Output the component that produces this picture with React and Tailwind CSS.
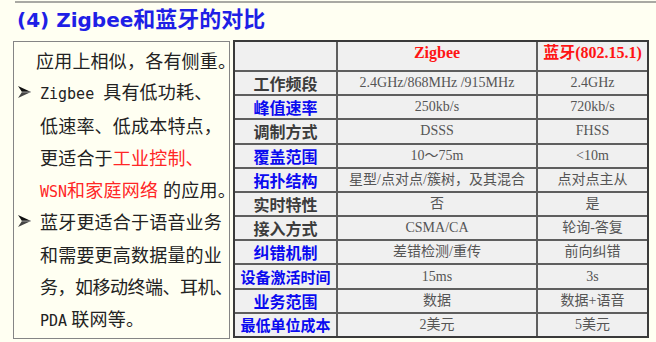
import React from "react";

const Arrow = () => (
  <svg width="13" height="12" viewBox="0 0 13 12" className="shrink-0">
    <polygon points="0,0 13,6 4,6" fill="#111" />
    <polygon points="4,6 13,6 0,12" fill="#444" />
    <line x1="4" y1="6" x2="13" y2="6" stroke="#bbb" strokeWidth="0.8" />
  </svg>
);

const rows = [
  ["工作频段", false, "2.4GHz/868MHz /915MHz", "2.4GHz"],
  ["峰值速率", true, "250kb/s", "720kb/s"],
  ["调制方式", false, "DSSS", "FHSS"],
  ["覆盖范围", true, "10～75m", "<10m"],
  ["拓扑结构", true, "星型/点对点/簇树，及其混合", "点对点主从"],
  ["实时特性", false, "否", "是"],
  ["接入方式", false, "CSMA/CA", "轮询-答复"],
  ["纠错机制", true, "差错检测/重传", "前向纠错"],
  ["设备激活时间", true, "15ms", "3s"],
  ["业务范围", true, "数据", "数据+语音"],
  ["最低单位成本", true, "2美元", "5美元"],
];

const Mono = ({ children }) => (
  <span className="font-['DejaVu_Sans_Mono',monospace] text-[15px] tracking-normal">{children}</span>
);

export default function App() {
  return (
    <div className="w-[656px] h-[342px] bg-[#fffff2] overflow-hidden">
      <div className="ml-[15px] mt-[1px] h-[2px] bg-[#a9a9a3]" />
      <div className="ml-[17px] mt-[5px] h-[24px] leading-[24px] whitespace-nowrap font-bold text-[20px] text-[#1f1fe6] font-['DejaVu_Sans','Noto_Sans_CJK_SC',sans-serif]">
        (4) Zigbee<span className="text-[22px]">和蓝牙的对比</span>
      </div>
      <div className="flex mt-[8px]">
        <div className="ml-[13px] mt-[1px] w-[217px] h-[298px] border border-[#858585] pt-[2px] text-[18px] tracking-[0.2px] text-[#222] font-['Noto_Sans_CJK_SC',sans-serif] whitespace-nowrap">
          <div className="h-[32.25px] leading-[32.25px] pl-[22px]">应用上相似，各有侧重。</div>
          <div className="h-[32.25px] leading-[32.25px] flex items-center pl-[4px]">
            <Arrow />
            <span className="ml-[9px]">
              <Mono>Zigbee</Mono>
              <span className="ml-[9px]">具有低功耗、</span>
            </span>
          </div>
          <div className="h-[32.25px] leading-[32.25px] pl-[26px]">低速率、低成本特点，</div>
          <div className="h-[32.25px] leading-[32.25px] pl-[26px]">
            更适合于<span className="text-[#ff2626]">工业控制、</span>
          </div>
          <div className="h-[32.25px] leading-[32.25px] pl-[26px]">
            <span className="text-[#ff2626]"><Mono>WSN</Mono>和家庭网络</span>
            <span className="ml-[5px]">的应用。</span>
          </div>
          <div className="h-[32.25px] leading-[32.25px] flex items-center pl-[4px]">
            <Arrow />
            <span className="ml-[9px]">蓝牙更适合于语音业务</span>
          </div>
          <div className="h-[32.25px] leading-[32.25px] pl-[26px]">和需要更高数据量的业</div>
          <div className="h-[32.25px] leading-[32.25px] pl-[26px] tracking-[-0.5px]">务，如移动终端、耳机、</div>
          <div className="h-[32.25px] leading-[32.25px] pl-[26px]">
            <Mono>PDA</Mono> 联网等。
          </div>
        </div>
        <div className="ml-[3px] w-[416px] h-[298px] border-2 border-[#3a3a3a] bg-[#5e5e5e] grid grid-cols-[101px_198px_109px] grid-rows-[28px_repeat(11,minmax(0,1fr))] gap-[2px]">
          <div className="bg-[#f0f0f0]" />
          <div className="bg-[#f0f0f0] flex justify-center items-start pt-[1px] text-[#ff1414] font-bold text-[16px] leading-[20px] font-['Liberation_Serif','Noto_Sans_CJK_SC',serif]">
            Zigbee
          </div>
          <div className="bg-[#f0f0f0] flex justify-center items-start pt-[1px] text-[#ff1414] font-bold text-[16px] leading-[20px] font-['Liberation_Serif','Noto_Sans_CJK_SC',serif] whitespace-nowrap">
            蓝牙(802.15.1)
          </div>
          {rows.map(([label, blue, a, b]) => (
            <React.Fragment key={label}>
              <div
                className={`bg-[#f0f0f0] flex items-center justify-center font-bold font-['Noto_Sans_CJK_SC',sans-serif] leading-none whitespace-nowrap ${
                  label.length > 4 ? "text-[15px]" : "text-[16px]"
                } ${blue ? "text-[#0a0af0]" : "text-[#3c3c3c]"}`}
              >
                {label}
              </div>
              <div className="bg-[#f0f0f0] flex items-center justify-center text-[14px] leading-none text-[#555] font-['Liberation_Serif','Noto_Sans_CJK_SC',serif] whitespace-nowrap">
                {a}
              </div>
              <div className="bg-[#f0f0f0] flex items-center justify-center text-[14px] leading-none text-[#555] font-['Liberation_Serif','Noto_Sans_CJK_SC',serif] whitespace-nowrap">
                {b}
              </div>
            </React.Fragment>
          ))}
        </div>
      </div>
    </div>
  );
}
